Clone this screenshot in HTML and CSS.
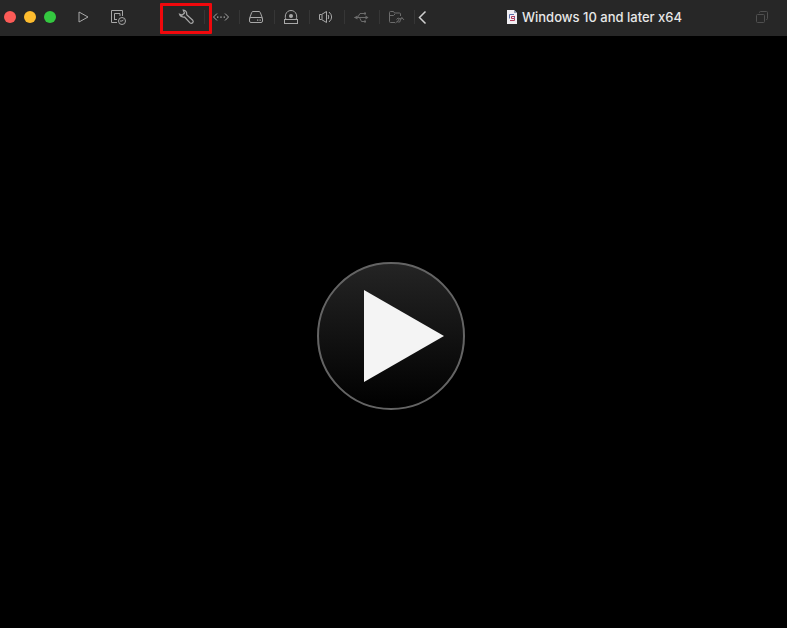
FILE: index.html
```html
<!DOCTYPE html>
<html lang="en">
<head>
<meta charset="utf-8">
<title>Windows 10 and later x64</title>
<link rel="stylesheet" href="styles.css">
</head>
<body>
<header class="titlebar">
  <div class="lights">
    <button class="light close" aria-label="Close"></button>
    <button class="light minimize" aria-label="Minimize"></button>
    <button class="light expand" aria-label="Zoom"></button>
  </div>
  <div class="group">
    <button class="tool" aria-label="Start"><svg viewBox="0 0 18 18"><path d="M5 4v10L14 9z"/></svg></button>
    <button class="tool" aria-label="Snapshots"><svg viewBox="0 0 18 18"><path d="M8 14.500H2.500V2.500H13.500V8M5.500 12V5.500H11V8M5 11.500H8"/><circle cx="13" cy="13" r="3.500"/><path d="M11 13h2l1.500-1"/></svg></button>
  </div>
  <div class="group devices">
    <button class="tool marked" aria-label="Settings"><svg viewBox="0 0 18 18"><path class="wrench" d="M6.300 2.200Q10.200 2.600 9.700 6.800L15.700 12.200Q16.800 13.500 15.700 14.800Q14.300 16 13 14.900L7.500 9Q3.500 9.600 2.500 6.200L5.200 7L7.500 5z"/></svg></button>
    <button class="tool" aria-label="Network"><svg viewBox="0 0 18 18"><path d="M5 5.500L1.500 9l3.500 3.500M13 5.500l3.500 3.500-3.500 3.500"/><path class="solid" d="M5 8.400h1.400v1.400H5zM8.300 8.400h1.400v1.400H8.300zM11.600 8.400H13v1.400h-1.400z"/></svg></button>
    <button class="tool" aria-label="Hard disk"><svg viewBox="0 0 18 18"><path d="M2.500 10.500L4.700 4.500Q5 3.500 6 3.500h6q1 0 1.300 1l2.200 6"/><rect x="2.500" y="9.500" width="13" height="5" rx="1.500"/><path class="solid" d="M10 11.500h1.300v1.200H10zM12.500 11.500h1.300v1.200h-1.300z"/></svg></button>
    <button class="tool" aria-label="Camera"><svg viewBox="0 0 18 18"><path d="M4 11.500Q2.800 9.500 3.500 6.800Q5 2.500 9 2.500t5.500 4.300Q15.200 9.500 14 11.500"/><rect x="2.500" y="11.500" width="13" height="4"/><circle class="solid" cx="9" cy="8" r="2"/></svg></button>
    <button class="tool" aria-label="Sound"><svg viewBox="0 0 18 18"><path d="M2.500 6.500h2L9.500 3.500v11L4.500 11.500h-2zM5 6.500v5M11.200 7Q12.300 9 11.200 11M12 4Q17.300 9 12 14"/></svg></button>
    <button class="tool faded" aria-label="USB"><svg viewBox="0 0 18 18"><path d="M2.500 9.500H15M5.500 9.500L8 5.500h4.500M7.500 9.500l2 4h3.500"/><path class="solid" d="M2 9.500L5.500 7.500v4zM12 4.500h2v2h-2zM12 12.500h2v2h-2zM13.500 7.500l3 2-3 2z"/></svg></button>
    <button class="tool faded" aria-label="Shared folders"><svg viewBox="0 0 18 18"><path d="M8 14.500H3.500q-1 0-1-1V4.500q0-1 1-1h3l1 1.500h5q1 0 1 1V8M2.500 7.500h4l1.500-1.500M9.500 11.500q1.500-2.500 2.800-1t3.700-.5M8.500 15q1.500-2.300 3-1t2-2.500 3.500.5M12.500 10.500l-2 3"/></svg></button>
    <button class="tool back" aria-label="Hide toolbar"><svg viewBox="0 0 18 18"><path d="M12.500 3.500L6.500 9.500 12.500 15.500"/></svg></button>
  </div>
  <div class="title">
    <svg class="document" viewBox="0 0 12 14"><path fill="#f0eef2" d="M1 0h7l3 3v11H1z"/><path fill="#8f9cb4" d="M8 0v3h3z"/><path fill="none" stroke="#5a6ea8" d="M3.500 8.500V4.500h4.500M8.500 6v2.500"/><path fill="none" stroke="#b03a5a" d="M9 6.500H5.500v2h3v2H4"/></svg>
    <h1>Windows 10 and later x64</h1>
  </div>
  <button class="windows" aria-label="Window mode"><svg viewBox="0 0 14 14"><rect x="1.500" y="4.500" width="8" height="8" rx="1"/><path d="M4.500 3V2.500q0-1 1-1h6q1 0 1 1v6q0 1-1 1H11"/></svg></button>
</header>
<main class="screen">
  <button class="power" aria-label="Start virtual machine"><svg viewBox="0 0 148 148"><path d="M47 28v92l80-46z"/></svg></button>
</main>
</body>
</html>
```
FILE: styles.css
```css
* { box-sizing: border-box; }

body {
  display: flex;
  flex-direction: column;
  min-height: 100vh;
  margin: 0;
  background: #000;
  font-family: Inter, "Liberation Sans", sans-serif;
}

button {
  margin: 0;
  padding: 0;
  border: 0;
  background: none;
  color: inherit;
}

svg {
  display: block;
  flex: none;
}

.titlebar {
  display: flex;
  align-items: center;
  height: 36px;
  padding: 0 18px 2px 4px;
  background: #272727;
  color: #a8a8a8;
}

.lights {
  display: flex;
  gap: 8px;
  margin-right: 11px;
}

.light {
  width: 12px;
  height: 12px;
  border-radius: 50%;
}

.close { background: #fc5b57; }
.minimize { background: #fdbc2e; }
.expand { background: #34c840; }

.group { display: flex; }
.devices { margin-left: 33px; }

.tool {
  position: relative;
  display: flex;
  align-items: center;
  justify-content: center;
  width: 35px;
  height: 18px;
  padding-right: 3px;
}

.tool svg {
  width: 18px;
  height: 18px;
}

.tool path,
.tool rect,
.tool circle,
.windows svg {
  fill: none;
  stroke: currentColor;
  stroke-width: 1;
}

.tool .wrench { stroke-width: 1.2; }

.tool .solid {
  fill: currentColor;
  stroke: none;
}

.devices .tool::before {
  content: "";
  position: absolute;
  top: 2px;
  right: 0;
  width: 1px;
  height: 14px;
  background: #363636;
}

.marked::after {
  content: "";
  position: absolute;
  inset: -5px -7px -8px -10px;
  border: 3px solid #f0080c;
  border-radius: 1px;
}

.faded { color: #6c6c6c; }

.devices .back {
  width: 14px;
  padding: 0;
  color: #d0d0d0;
}

.devices .back::before { display: none; }
.tool.back path { stroke-width: 1.5px; }

.title {
  display: flex;
  flex: 1;
  align-items: center;
  justify-content: center;
  gap: 4px;
  min-width: 0;
  padding-left: 4px;
}

.document {
  width: 12px;
  height: 14px;
}

h1 {
  margin: 0;
  color: #e8e8e8;
  font-size: 13px;
  font-weight: 500;
  line-height: 16px;
  white-space: nowrap;
}

.windows { color: #505050; }

.windows svg {
  width: 14px;
  height: 14px;
}

.screen {
  display: flex;
  flex: 1;
  align-items: center;
  justify-content: center;
  padding: 8px 5px 0 0;
}

.power {
  width: 148px;
  height: 148px;
  border: 2px solid #646464;
  border-radius: 50%;
  background: linear-gradient(#242424, #000);
}

.power svg {
  width: 148px;
  height: 148px;
  margin: -2px;
  fill: #f4f4f4;
}
```
